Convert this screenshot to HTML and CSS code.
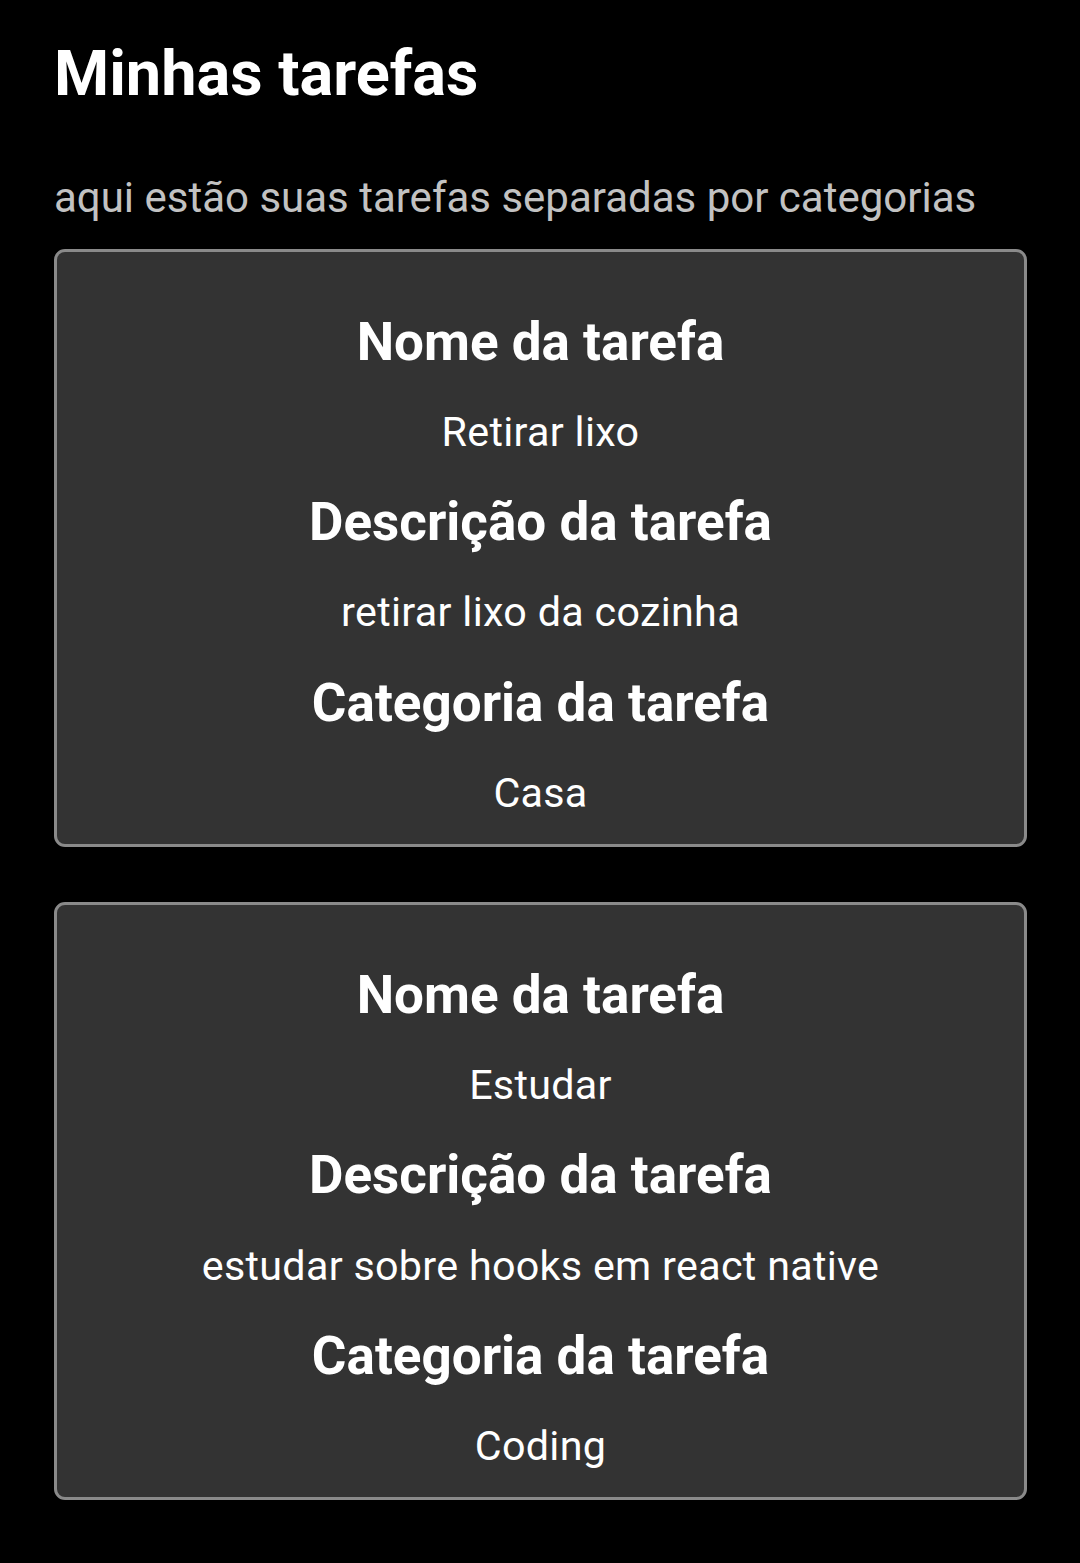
FILE: index.html
```html
<!DOCTYPE html>
<html lang="pt">
<head>
<meta charset="utf-8">
<title>Minhas tarefas</title>
<link rel="stylesheet" href="styles.css">
</head>
<body>
<main class="screen">
  <h1 class="title">Minhas tarefas</h1>
  <p class="subtitle">aqui estão suas tarefas separadas por categorias</p>
  <section class="card">
    <h2 class="label">Nome da tarefa</h2>
    <p class="value">Retirar lixo</p>
    <h2 class="label">Descrição da tarefa</h2>
    <p class="value">retirar lixo da cozinha</p>
    <h2 class="label">Categoria da tarefa</h2>
    <p class="value">Casa</p>
  </section>
  <section class="card">
    <h2 class="label">Nome da tarefa</h2>
    <p class="value">Estudar</p>
    <h2 class="label">Descrição da tarefa</h2>
    <p class="value">estudar sobre hooks em react native</p>
    <h2 class="label">Categoria da tarefa</h2>
    <p class="value">Coding</p>
  </section>
</main>
</body>
</html>
```
FILE: styles.css
```css
html, body {
  margin: 0;
  padding: 0;
  background: #000;
}
body {
  font-family: Roboto, "Noto Sans", "Liberation Sans", sans-serif;
  color: #fff;
  width: 1080px;
  min-height: 1563px;
}
.screen {
  display: flex;
  flex-direction: column;
  padding: 36.5px 53px 0 54px;
}
.title {
  margin: 0;
  font-size: 63px;
  font-weight: 700;
  line-height: 73.8px;
  color: #fff;
}
.subtitle {
  margin: 62.4px 0 0;
  font-size: 42px;
  font-weight: 400;
  line-height: 49.2px;
  color: #c2c2c2;
}
.card {
  margin-top: 27px;
  background: #333333;
  border: 3px solid #8a8a8a;
  border-radius: 11px;
  padding: 24px 20px 27px;
  display: flex;
  flex-direction: column;
  align-items: center;
  text-align: center;
}
.card + .card {
  margin-top: 55px;
}
.label {
  margin: 35px 0 0;
  font-size: 53px;
  font-weight: 700;
  line-height: 62.1px;
}
.value {
  margin: 35px 0 0;
  font-size: 41.25px;
  font-weight: 400;
  line-height: 48.3px;
  letter-spacing: 0.3px;
}
```
